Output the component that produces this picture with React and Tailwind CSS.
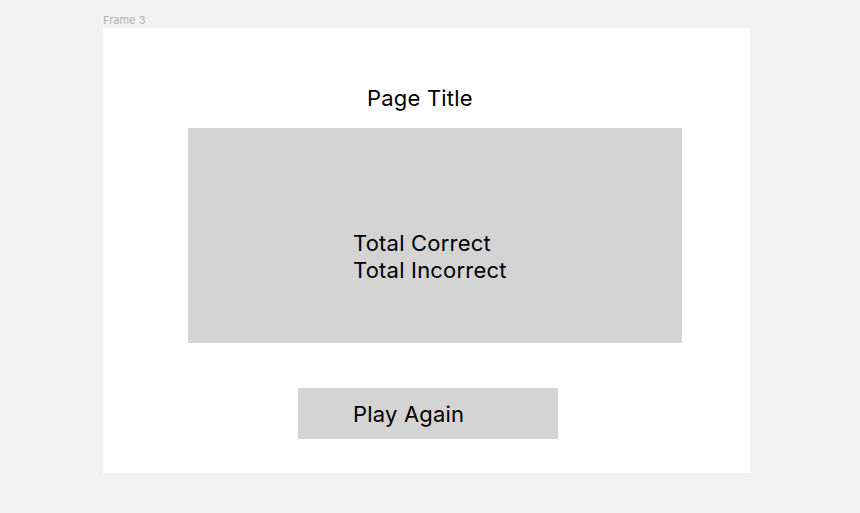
export default function App() {
  return (
    <div className="min-h-screen bg-[#f2f2f2] pl-[103px] font-['Inter','Liberation_Sans',sans-serif]">
      <div className="pt-[14px] text-[11px] leading-[13px] text-[#b3b3b3]">Frame 3</div>

      {/* frame */}
      <div className="mt-px h-[445px] w-[647px] bg-white pt-[57px]">
        <h1 className="pl-[264px] text-[22px] leading-[27px] tracking-[0.2px] text-black">Page Title</h1>

        {/* results box */}
        <div className="ml-[85px] mt-[16px] h-[215px] w-[494px] bg-[#d4d4d4] pl-[165px] pt-[102px] text-[22px] leading-[27px] tracking-[0.2px] text-black">
          <div>Total Correct</div>
          <div>Total Incorrect</div>
        </div>

        <button className="ml-[195px] mt-[45px] block h-[51px] w-[260px] bg-[#d4d4d4] pl-[55px] pt-[2px] text-left text-[22px] leading-[27px] tracking-[0.2px] text-black">
          Play Again
        </button>
      </div>
    </div>
  );
}
